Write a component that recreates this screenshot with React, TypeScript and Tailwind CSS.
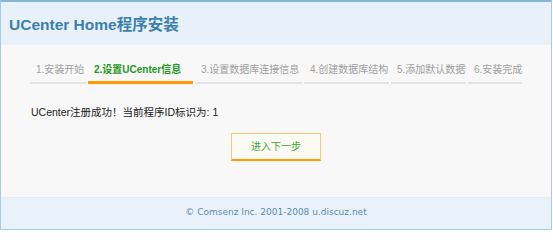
const steps = [
  { label: '1.安装开始', w: 'w-[56px]' },
  { label: '2.设置UCenter信息', w: 'w-[105px]', active: true },
  { label: '3.设置数据库连接信息', w: 'w-[107px]' },
  { label: '4.创建数据库结构', w: 'w-[85px]' },
  { label: '5.添加默认数据', w: 'w-[75px]' },
  { label: '6.安装完成', w: 'w-[54px]' },
];

export default function App() {
  return (
    <div className="h-[231px] w-[553px] bg-white">
      <div
        className="flex h-[230px] w-[552px] flex-col border-x border-t-2 border-b border-[#a9cbe6] border-t-[#86b5da] bg-[#f8f8f8]"
        style={{ fontFamily: '"Liberation Sans", "Noto Sans CJK SC", sans-serif' }}
      >
        {/* header */}
        <div className="flex h-[43px] items-center bg-[#e8f1f9] pl-[8px] pt-[3px]">
          <h1 className="text-[15.5px] font-bold text-[#3b7fad]">UCenter Home程序安装</h1>
        </div>

        {/* body */}
        <div className="flex flex-1 flex-col">
          <div className="mt-[19px] flex gap-[2px] pl-[29px]">
            {steps.map((s) => (
              <div
                key={s.label}
                className={`${s.w} whitespace-nowrap pl-[6px] pb-[5px] text-[10px] leading-[12px] ${
                  s.active
                    ? 'border-b-[3px] border-[#ff9a00] font-bold text-[#1c9a1c]'
                    : 'border-b-2 border-[#e3e3e3] text-[#a0a0a0]'
                }`}
              >
                {s.label}
              </div>
            ))}
          </div>

          <p className="mt-[21px] pl-[30px] text-[10.5px] leading-[14px] text-[#222]">
            UCenter注册成功！当前程序ID标识为: 1
          </p>

          <div className="mt-[14px] flex justify-center">
            <button className="h-[28px] w-[90px] border border-b-2 border-[#ffc66b] border-b-[#ff9a00] bg-[#fbfaf3] text-[10px] text-[#3aa73a]">
              进入下一步
            </button>
          </div>
        </div>

        {/* footer */}
        <div className="flex h-[32px] items-center justify-center border-t border-[#e0ecf6] bg-[#e9f2fa] pb-[2px] text-[9px] text-[#5c8cb2]" style={{ fontFamily: '"DejaVu Sans", sans-serif' }}>
          © Comsenz Inc. 2001-2008 u.discuz.net
        </div>
      </div>
    </div>
  );
}
